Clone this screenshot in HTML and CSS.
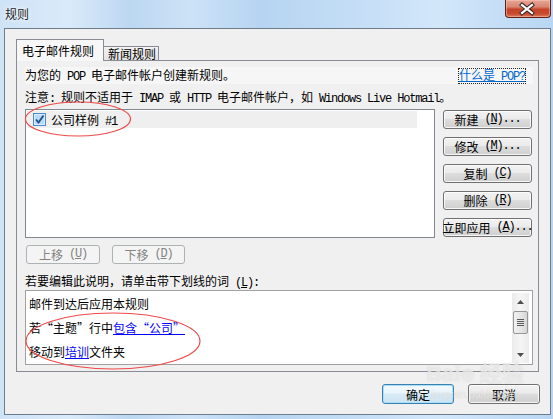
FILE: index.html
```html
<!DOCTYPE html>
<html lang="zh-CN">
<head>
<meta charset="utf-8">
<title>规则</title>
<link rel="stylesheet" href="styles.css">
</head>
<body>
<div class="window">
  <div class="titlebar">
    <span class="title">规则</span>
    <div class="close">
      <svg width="46" height="18" viewBox="0 0 46 18">
        <path d="M18 5 L28 13 M28 5 L18 13" stroke="#3b2a2a" stroke-width="4.2" stroke-linecap="square" fill="none"/>
        <path d="M18 5 L28 13 M28 5 L18 13" stroke="#ffffff" stroke-width="2.2" stroke-linecap="square" fill="none"/>
      </svg>
    </div>
  </div>
  <div class="client">
    <div class="tabs">
      <div class="tab active">电子邮件规则</div>
      <div class="tab">新闻规则</div>
    </div>
    <div class="pane">
      <div class="intro">
        <span>为您的<span class="m"> POP </span>电子邮件帐户创建新规则。</span>
        <span class="whatis">什么是<span class="m"> POP?</span></span>
      </div>
      <div class="note">注意<span class="m">: </span>规则不适用于<span class="m"> IMAP </span>或<span class="m"> HTTP </span>电子邮件帐户，如<span class="m"> Windows Live Hotmail</span>。</div>
      <div class="listarea">
        <div class="list">
          <div class="item">
            <svg class="cb" width="13" height="13" viewBox="0 0 13 13">
              <rect x="0.5" y="0.5" width="12" height="12" fill="#dcedfb" stroke="#4f8ad0"/>
              <rect x="2" y="2" width="9" height="9" fill="#b9dbf6"/>
              <path d="M3 6.5 L5.5 9.5 L10.5 2.5" stroke="#1c4d90" stroke-width="1.8" fill="none"/>
            </svg>
            <span>公司样例<span class="m"> #1</span></span>
          </div>
        </div>
        <div class="btncol">
          <div class="btn">新建<span class="m"> (<u>N</u>)...</span></div>
          <div class="btn">修改<span class="m"> (<u>M</u>)...</span></div>
          <div class="btn">复制<span class="m"> (<u>C</u>)</span></div>
          <div class="btn">删除<span class="m"> (<u>R</u>)</span></div>
          <div class="btn">立即应用<span class="m"> (<u>A</u>)...</span></div>
        </div>
      </div>
      <div class="moverow">
        <div class="btn disabled up">上移<span class="m"> (<u>U</u>)</span></div>
        <div class="btn disabled down">下移<span class="m"> (<u>D</u>)</span></div>
      </div>
      <div class="desclabel">若要编辑此说明，请单击带下划线的词<span class="m"> (<u>L</u>):</span></div>
      <div class="desc">
        <div class="lines">
          <div class="line">邮件到达后应用本规则</div>
          <div class="line">若“主题”行中<span class="lnk">包含“公司”</span></div>
          <div class="line">移动到<span class="lnk">培训</span>文件夹</div>
        </div>
        <div class="scroll">
          <div class="arrow"><svg width="7" height="4" viewBox="0 0 7 4"><path d="M0 4 L3.5 0 L7 4 Z" fill="#4d4d4d"/></svg></div>
          <div class="thumb"><span></span><span></span><span></span><span></span></div>
          <div class="track"></div>
          <div class="arrow"><svg width="7" height="4" viewBox="0 0 7 4"><path d="M0 0 L3.5 4 L7 0 Z" fill="#4d4d4d"/></svg></div>
        </div>
      </div>
    </div>
    <div class="footer">
      <div class="btn ok">确定</div>
      <div class="btn cancel">取消</div>
    </div>
  </div>
</div>
<svg class="annot" width="553" height="419" viewBox="0 0 553 419">
  <ellipse cx="78" cy="119" rx="52.5" ry="17" fill="none" stroke="#ee4a4a" stroke-width="1.2"/>
  <ellipse cx="113" cy="341" rx="87" ry="28" fill="none" stroke="#ee4a4a" stroke-width="1.2"/>
</svg>
<div class="watermark"><span class="wm1">Bai<span class="paw">❁</span> 经验</span><span class="wm2">jingyan.baidu.com</span></div>
</body>
</html>
```
FILE: styles.css
```css
html, body {
  margin: 0;
  padding: 0;
}
body {
  width: 553px;
  height: 419px;
  overflow: hidden;
  position: relative;
  font-family: "Noto Sans CJK SC", "Liberation Sans", sans-serif;
  font-size: 12px;
  color: #000;
  background: linear-gradient(90deg, #cfe3f7 0px, #d9eafa 70px, #bcd7f1 130px, #cde2f7 190px, #b6d4f1 260px, #c8e0f7 380px, #d3e7fa 440px, #b8d6f3 553px);
}
.window {
  width: 553px;
  height: 419px;
  display: flex;
  flex-direction: column;
}
.titlebar {
  height: 28px;
  display: flex;
  align-items: flex-start;
}
.title {
  margin: 6px 0 0 5px;
  line-height: 16px;
  font-size: 12px;
  color: #1a1a1a;
  text-shadow: 0 0 5px rgba(255,255,255,0.95), 0 0 2px rgba(255,255,255,0.9);
}
.close {
  margin-left: auto;
  margin-right: 2px;
  width: 46px;
  height: 18px;
  box-sizing: border-box;
  border: 1px solid #5e2115;
  border-top: none;
  border-radius: 0 0 4px 4px;
  background: linear-gradient(#e7a696 0%, #d98672 40%, #c5432b 55%, #c94a2e 80%, #de7a55 100%);
  box-shadow: inset 0 0 0 1px rgba(255,200,190,0.5);
  display: flex;
  align-items: center;
  justify-content: center;
}
.close svg { display: block; margin-left: -2px; }
.client {
  margin-left: 4px;
  width: 547px;
  height: 387px;
  box-sizing: border-box;
  border: 1px solid #6f7c8c;
  background: #f0f0f0;
  display: flex;
  flex-direction: column;
}
.tabs {
  margin: 10px 0 0 11px;
  height: 21px;
  display: flex;
  align-items: flex-end;
}
.tab {
  box-sizing: border-box;
  border: 1px solid #898c95;
  border-bottom: none;
  white-space: nowrap;
}
.tab.active {
  position: relative;
  z-index: 1;
  width: 88px;
  height: 22px;
  margin-bottom: -1px;
  background: #f7f7f7;
  padding: 3px 0 0 5px;
  line-height: 16px;
}
.tab:not(.active) {
  width: 56px;
  height: 14px;
  margin-left: -1px;
  background: linear-gradient(#f2f2f2, #e3e3e3);
  line-height: 13px;
  padding-left: 4px;
}
.pane {
  margin-left: 11px;
  width: 523px;
  height: 312px;
  box-sizing: border-box;
  border: 1px solid #898c95;
  background: #f0f0f0;
  display: flex;
  flex-direction: column;
}
.m {
  font-family: "Liberation Mono", monospace;
  font-size: 12px;
  letter-spacing: -1.2px;
  white-space: pre;
}
.intro {
  margin: 6px 5px 0 8px;
  height: 17px;
  background: #f6f6f6;
  display: flex;
  align-items: center;
  justify-content: space-between;
  line-height: 15px;
  white-space: nowrap;
}
.whatis {
  margin-right: 8px;
  color: #0066cc;
  text-decoration: underline;
  outline: 1px dotted #222;
  line-height: 12px;
}
.note {
  margin: 3px 0 0 8px;
  line-height: 20px;
  height: 20px;
  white-space: nowrap;
}
.listarea {
  margin: 2px 0 0 8px;
  display: flex;
  gap: 8px;
}
.list {
  width: 410px;
  height: 129px;
  box-sizing: border-box;
  border: 1px solid #828790;
  background: #fff;
  padding: 1px;
}
.item {
  width: 390px;
  height: 17px;
  background: #efefef;
  display: flex;
  align-items: center;
  padding-left: 6px;
  box-sizing: border-box;
  gap: 5px;
  white-space: nowrap;
}
.cb { display: block; flex: none; }
.btncol {
  padding-top: 1px;
  display: flex;
  flex-direction: column;
  gap: 8px;
}
.btn {
  box-sizing: border-box;
  height: 19px;
  border: 1px solid #707070;
  border-radius: 3px;
  background: linear-gradient(#f2f2f2 0%, #ebebeb 45%, #dddddd 50%, #cfcfcf 100%);
  box-shadow: inset 0 0 0 1px rgba(255,255,255,0.8);
  display: flex;
  align-items: center;
  justify-content: center;
  line-height: 15px;
  white-space: nowrap;
}
.btncol .btn { width: 89px; }
.btn.disabled {
  border-color: #adb2b5;
  background: #f4f4f4;
  box-shadow: none;
  color: #838383;
}
.moverow {
  margin: 7px 0 0 9px;
  display: flex;
  gap: 12px;
}
.moverow .up { width: 74px; }
.moverow .down { width: 73px; }
.desclabel {
  margin: 8px 0 0 8px;
  line-height: 18px;
  height: 18px;
  white-space: nowrap;
}
.desc {
  margin-left: 8px;
  width: 508px;
  height: 75px;
  box-sizing: border-box;
  border: 1px solid #a0a0a0;
  background: #fff;
  display: flex;
}
.lines {
  flex: 1;
  padding: 1px 0 0 3px;
}
.line {
  line-height: 24px;
  height: 24px;
  white-space: nowrap;
}
.lnk {
  color: #0000ff;
  text-decoration: underline;
}
.scroll {
  width: 17px;
  margin: 2px 3px 1px 0;
  background: linear-gradient(90deg, #ebebeb, #f5f5f5 50%, #ebebeb);
  display: flex;
  flex-direction: column;
}
.arrow {
  height: 17px;
  display: flex;
  align-items: center;
  justify-content: center;
}
.thumb {
  height: 23px;
  margin: 1px 1px 0 1px;
  box-sizing: border-box;
  border: 1px solid #979797;
  border-radius: 2px;
  background: linear-gradient(90deg, #f1f1f1, #e4e4e4 60%, #d6d6d6);
  display: flex;
  flex-direction: column;
  align-items: center;
  justify-content: center;
  gap: 1px;
}
.thumb span {
  width: 7px;
  height: 1px;
  background: #5a5a5a;
}
.track { flex: 1; }
.footer {
  margin: 12px 10px 0 0;
  display: flex;
  justify-content: flex-end;
  gap: 14px;
}
.footer .btn {
  width: 72px;
  height: 20px;
}
.btn.ok {
  border-color: #3c7fb1;
  background: linear-gradient(#f4fafe 0%, #e9f4fb 45%, #d8ebf7 50%, #cde4f3 100%);
  box-shadow: inset 0 0 0 1px #a8e0f8;
}
.annot {
  position: absolute;
  left: 0;
  top: 0;
  pointer-events: none;
}
.watermark {
  position: absolute;
  left: 420px;
  top: 362px;
  width: 110px;
  display: flex;
  flex-direction: column;
  align-items: center;
  color: rgba(255,255,255,0.6);
  text-shadow: 0 0 1px rgba(160,160,160,0.5);
  pointer-events: none;
}
.wm1 {
  font-family: "Liberation Sans", "Noto Sans CJK SC", sans-serif;
  font-size: 22px;
  font-weight: bold;
  line-height: 24px;
}
.paw { font-size: 16px; }
.wm2 {
  font-family: "Liberation Sans", sans-serif;
  font-size: 11px;
  line-height: 13px;
}
```
